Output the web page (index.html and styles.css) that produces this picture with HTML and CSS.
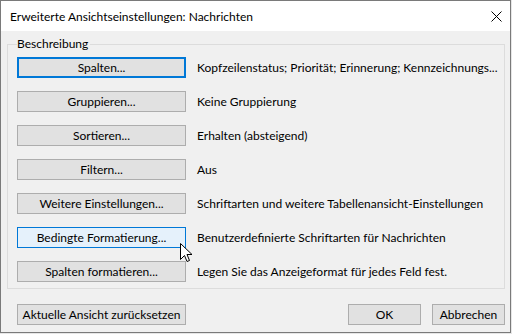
FILE: index.html
```html
<!DOCTYPE html>
<html lang="de">
<head>
<meta charset="utf-8">
<title>Erweiterte Ansichtseinstellungen: Nachrichten</title>
<link rel="stylesheet" href="styles.css">
</head>
<body>
<div class="window">
  <div class="titlebar">
    <span class="title">Erweiterte Ansichtseinstellungen: Nachrichten</span>
    <svg class="close" width="11" height="11" viewBox="0 0 11 11"><path d="M0.5 0.5 L10.5 10.5 M10.5 0.5 L0.5 10.5" stroke="#000" stroke-width="1" fill="none"/></svg>
  </div>
  <div class="content">
    <fieldset class="group">
      <legend>Beschreibung</legend>
      <div class="row"><button class="btn focus">Spalten...</button><span class="desc">Kopfzeilenstatus; Priorität; Erinnerung; Kennzeichnungs...</span></div>
      <div class="row"><button class="btn">Gruppieren...</button><span class="desc">Keine Gruppierung</span></div>
      <div class="row"><button class="btn">Sortieren...</button><span class="desc">Erhalten (absteigend)</span></div>
      <div class="row"><button class="btn">Filtern...</button><span class="desc">Aus</span></div>
      <div class="row"><button class="btn">Weitere Einstellungen...</button><span class="desc">Schriftarten und weitere Tabellenansicht-Einstellungen</span></div>
      <div class="row hover-row"><button class="btn hover">Bedingte Formatierung...</button><span class="desc">Benutzerdefinierte Schriftarten für Nachrichten</span>
        <svg class="cursor" width="13" height="20" viewBox="0 0 13 20"><path d="M0.5 0.5 L0.5 16.5 L4.5 12.5 L7 18.5 L9.5 17.5 L7 11.5 L12 11.5 Z" fill="#fff" stroke="#000" stroke-width="1" stroke-linejoin="miter"/></svg>
      </div>
      <div class="row"><button class="btn">Spalten formatieren...</button><span class="desc">Legen Sie das Anzeigeformat für jedes Feld fest.</span></div>
    </fieldset>
    <div class="footer">
      <button class="btn">Aktuelle Ansicht zurücksetzen</button>
      <div class="spacer"></div>
      <button class="btn small">OK</button>
      <button class="btn small">Abbrechen</button>
    </div>
  </div>
</div>
</body>
</html>
```
FILE: styles.css
```css
html, body {
  margin: 0;
  padding: 0;
}
body {
  background: #e6e6e6;
  font-family: Lato, "Noto Sans", "Liberation Sans", sans-serif;
  font-size: 12px;
  color: #000;
}
.window {
  box-sizing: border-box;
  width: 511px;
  height: 333px;
  border: 1px solid #7a7a7a;
  background: #f0f0f0;
  display: flex;
  flex-direction: column;
}
.titlebar {
  height: 30px;
  background: #fff;
  display: flex;
  align-items: center;
  padding-left: 9px;
  padding-right: 8px;
  flex-shrink: 0;
}
.title {
  flex: 1;
  font-size: 12px;
  white-space: nowrap;
}
.close {
  display: block;
  flex-shrink: 0;
}
.content {
  padding: 6px 5px 0 6px;
}
.group {
  margin: 0;
  border: 1px solid #dcdcdc;
  padding: 6px 9px 6px 9px;
  min-width: 0;
}
.group legend {
  padding: 0 2px 0 0;
  margin-left: 0;
  line-height: 14px;
}
.row {
  display: flex;
  align-items: center;
  height: 21px;
  margin-bottom: 13px;
  position: relative;
}
.row:last-child {
  margin-bottom: 0;
}
.btn {
  box-sizing: border-box;
  flex-shrink: 0;
  width: 169px;
  height: 21px;
  background: #e1e1e1;
  border: 1px solid #adadad;
  font-family: inherit;
  font-size: 12px;
  color: #000;
  padding: 0;
  margin: 0;
  white-space: nowrap;
}
.btn.focus {
  border: 2px solid #0078d7;
}
.btn.hover {
  background: #e5f1fb;
  border-color: #0078d7;
}
.desc {
  margin-left: 11px;
  white-space: nowrap;
}
.cursor {
  position: absolute;
  left: 163px;
  top: 16px;
}
.footer {
  display: flex;
  margin-top: 15px;
  padding-left: 10px;
  gap: 11px;
}
.spacer {
  flex: 1;
}
.btn.small {
  width: 73px;
}
```
